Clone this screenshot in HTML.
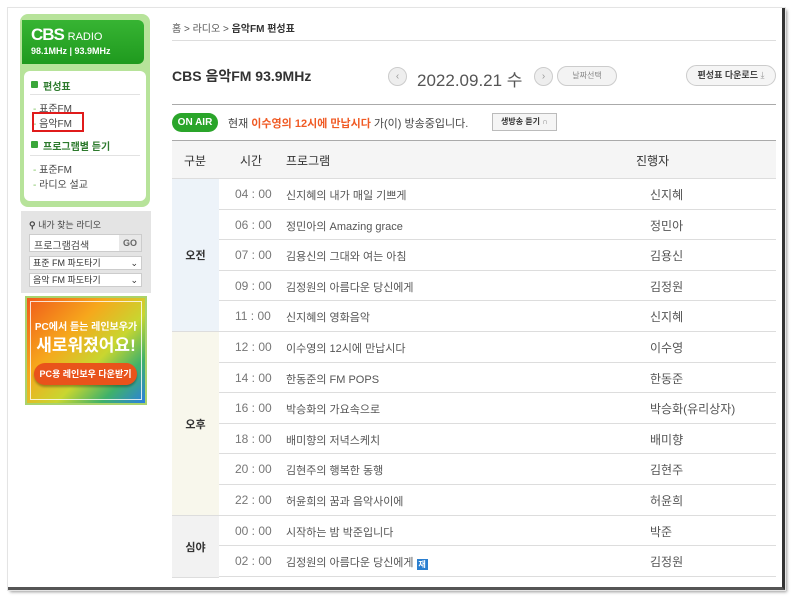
<!DOCTYPE html>
<html><head><meta charset="utf-8"><style>
*{margin:0;padding:0;box-sizing:border-box}
body{width:793px;height:600px;background:#fff;position:relative;overflow:hidden;font-family:"Liberation Sans","Noto Sans CJK KR",sans-serif;color:#333}
.a{position:absolute}
.page{left:8px;top:8px;width:777px;height:582px;background:#fff;border-right:3px solid #333;border-bottom:3px solid #555;box-shadow:2px 2px 3px rgba(0,0,0,.4);outline:1px solid #e4e4e4}
.row{position:absolute;left:219px;width:557px;height:31px;border-top:1px solid #ddd;font-size:11px;color:#555}
.row span{position:absolute;line-height:14px;height:14px;white-space:nowrap}
.t{left:16px;top:8px;font-size:12px;color:#777}
.row span.p{left:67px;top:10px}
.h{left:431px;top:9px;font-size:12px;color:#555}
.sec{position:absolute;left:172px;width:47px;border-top:1px solid #ddd;font-size:11px;font-weight:bold;color:#333;display:flex;align-items:center;justify-content:center}
</style></head><body>
<div class="a page"></div>

<!-- sidebar -->
<div class="a" style="left:20px;top:14px;width:130px;height:193px;background:#b7e39a;border-radius:8px"></div>
<div class="a" style="left:22px;top:20px;width:122px;height:44px;background:linear-gradient(#37b433,#1f9a1e);border-radius:0 6px 6px 0"></div>
<div class="a" style="left:31px;top:25px;color:#fff;font-size:17px;font-weight:bold;letter-spacing:-1px">CBS <span style="font-size:11px;font-weight:normal;letter-spacing:0">RADIO</span></div>
<div class="a" style="left:31px;top:46px;color:#fff;font-size:9px;font-weight:bold">98.1MHz | 93.9MHz</div>
<div class="a" style="left:24px;top:71px;width:122px;height:130px;background:#fff;border-radius:6px"></div>
<div class="a" style="left:31px;top:81px;width:7px;height:7px;background:#3aa63a;border-radius:1px"></div>
<div class="a" style="left:43px;top:78px;font-size:10px;font-weight:bold;color:#2d7a2d">편성표</div>
<div class="a" style="left:30px;top:94px;width:110px;height:1px;background:#e2e2e2"></div>
<div class="a" style="left:33px;top:100px;font-size:10px;color:#444"><span style="color:#7bc35b">-</span> 표준FM</div>
<div class="a" style="left:33px;top:115px;font-size:10px;color:#444"><span style="color:#7bc35b">-</span> 음악FM</div>
<div class="a" style="left:32px;top:112px;width:52px;height:20px;border:2px solid #e01b1b"></div>
<div class="a" style="left:31px;top:141px;width:7px;height:7px;background:#3aa63a;border-radius:1px"></div>
<div class="a" style="left:43px;top:138px;font-size:10px;font-weight:bold;color:#2d7a2d">프로그램별 듣기</div>
<div class="a" style="left:30px;top:155px;width:110px;height:1px;background:#e2e2e2"></div>
<div class="a" style="left:33px;top:161px;font-size:10px;color:#444"><span style="color:#7bc35b">-</span> 표준FM</div>
<div class="a" style="left:33px;top:176px;font-size:10px;color:#444"><span style="color:#7bc35b">-</span> 라디오 설교</div>

<div class="a" style="left:21px;top:211px;width:130px;height:82px;background:#e4e4e4"></div>
<div class="a" style="left:29px;top:218px;font-size:9px;color:#444"><b>&#9906;</b> 내가 찾는 라디오</div>
<div class="a" style="left:29px;top:234px;width:113px;height:18px;background:#fff;border:1px solid #ccc;font-size:10px;padding:2px 4px;color:#444">프로그램검색</div>
<div class="a" style="left:119px;top:235px;width:22px;height:16px;background:#e8e8e8;font-size:9px;font-weight:bold;color:#666;text-align:center;line-height:16px">GO</div>
<div class="a" style="left:29px;top:256px;width:113px;height:14px;background:#fff;border:1px solid #ccc;font-size:9px;padding:0 3px;line-height:12px">표준 FM 파도타기<span style="float:right">&#8964;</span></div>
<div class="a" style="left:29px;top:273px;width:113px;height:14px;background:#fff;border:1px solid #ccc;font-size:9px;padding:0 3px;line-height:12px">음악 FM 파도타기<span style="float:right">&#8964;</span></div>

<div class="a" style="left:25px;top:296px;width:122px;height:109px;background:linear-gradient(135deg,#f05a1a 0%,#f6a81c 35%,#c8d630 60%,#3fb16a 80%,#2a7fe0 100%);border:2px solid #a9d36d"></div>
<div class="a" style="left:30px;top:301px;width:112px;height:99px;border:1px solid rgba(255,255,255,.8)"></div>
<div class="a" style="left:25px;top:318px;width:122px;text-align:center;color:#fff;font-size:10px;font-weight:bold">PC에서 듣는 레인보우가</div>
<div class="a" style="left:25px;top:331px;width:122px;text-align:center;color:#fff;font-size:17px;font-weight:bold">새로워졌어요!</div>
<div class="a" style="left:34px;top:363px;width:103px;height:22px;background:#e9531b;border-radius:11px;color:#fff;font-size:9px;font-weight:bold;text-align:center;line-height:22px;box-shadow:0 2px 2px rgba(0,0,0,.3)">PC용 레인보우 다운받기</div>

<!-- main -->
<div class="a" style="left:172px;top:20px;font-size:10px;color:#555">홈 &gt; 라디오 &gt; <b style="color:#333">음악FM 편성표</b></div>
<div class="a" style="left:172px;top:40px;width:604px;height:1px;background:#ddd"></div>
<div class="a" style="left:172px;top:66px;font-size:14px;font-weight:bold;color:#333">CBS 음악FM 93.9MHz</div>
<div class="a" style="left:388px;top:67px;width:19px;height:19px;border-radius:50%;background:#eee;border:1px solid #ccc;font-size:10px;color:#999;text-align:center;line-height:17px">&lsaquo;</div>
<div class="a" style="left:417px;top:66px;font-size:17px;color:#555">2022.09.21 수</div>
<div class="a" style="left:534px;top:67px;width:19px;height:19px;border-radius:50%;background:#eee;border:1px solid #ccc;font-size:10px;color:#999;text-align:center;line-height:17px">&rsaquo;</div>
<div class="a" style="left:557px;top:66px;width:60px;height:20px;border-radius:10px;background:#f3f3f3;border:1px solid #ccc;font-size:8px;color:#888;text-align:center;line-height:18px">날짜선택</div>
<div class="a" style="left:686px;top:65px;width:90px;height:21px;border-radius:11px;background:#f5f5f5;border:1px solid #ccc;font-size:9px;font-weight:bold;color:#444;text-align:center;line-height:19px">편성표 다운로드 <span style="font-weight:normal;color:#999">&#10515;</span></div>
<div class="a" style="left:172px;top:104px;width:604px;height:1px;background:#aaa"></div>
<div class="a" style="left:172px;top:113px;width:46px;height:19px;border-radius:10px;background:#2aa52a;color:#fff;font-size:10px;font-weight:bold;text-align:center;line-height:19px">ON AIR</div>
<div class="a" style="left:228px;top:115px;font-size:11px;color:#444">현재 <b style="color:#f05a24">이수영의 12시에 만납시다</b> 가(이) 방송중입니다.</div>
<div class="a" style="left:492px;top:113px;width:65px;height:18px;background:#f5f5f5;border:1px solid #bbb;font-size:8px;font-weight:bold;color:#333;text-align:center;line-height:16px">생방송 듣기 <span style="font-weight:normal;color:#888">&#8745;</span></div>

<div class="a" style="left:172px;top:140px;width:604px;height:38px;background:#f5f5f5;border-top:1px solid #aaa"></div>
<div class="a" style="left:184px;top:152px;font-size:12px;color:#333">구분</div>
<div class="a" style="left:240px;top:152px;font-size:12px;color:#333">시간</div>
<div class="a" style="left:286px;top:152px;font-size:12px;color:#333">프로그램</div>
<div class="a" style="left:636px;top:152px;font-size:12px;color:#333">진행자</div>

<div class="sec" style="top:178px;height:153px;background:#edf3f9">오전</div>
<div class="sec" style="top:331px;height:184px;background:#f8f7ec">오후</div>
<div class="sec" style="top:515px;height:62px;background:#f2f2f2">심야</div>

<div class="row" style="top:178px"><span class="t">04 : 00</span><span class="p">신지혜의 내가 매일 기쁘게</span><span class="h">신지혜</span></div>
<div class="row" style="top:209px"><span class="t">06 : 00</span><span class="p">정민아의 Amazing grace</span><span class="h">정민아</span></div>
<div class="row" style="top:239px"><span class="t">07 : 00</span><span class="p">김용신의 그대와 여는 아침</span><span class="h">김용신</span></div>
<div class="row" style="top:270px"><span class="t">09 : 00</span><span class="p">김정원의 아름다운 당신에게</span><span class="h">김정원</span></div>
<div class="row" style="top:300px"><span class="t">11 : 00</span><span class="p">신지혜의 영화음악</span><span class="h">신지혜</span></div>
<div class="row" style="top:331px"><span class="t">12 : 00</span><span class="p">이수영의 12시에 만납시다</span><span class="h">이수영</span></div>
<div class="row" style="top:362px"><span class="t">14 : 00</span><span class="p">한동준의 FM POPS</span><span class="h">한동준</span></div>
<div class="row" style="top:392px"><span class="t">16 : 00</span><span class="p">박승화의 가요속으로</span><span class="h">박승화(유리상자)</span></div>
<div class="row" style="top:423px"><span class="t">18 : 00</span><span class="p">배미향의 저녁스케치</span><span class="h">배미향</span></div>
<div class="row" style="top:453px"><span class="t">20 : 00</span><span class="p">김현주의 행복한 동행</span><span class="h">김현주</span></div>
<div class="row" style="top:484px"><span class="t">22 : 00</span><span class="p">허윤희의 꿈과 음악사이에</span><span class="h">허윤희</span></div>
<div class="row" style="top:515px"><span class="t">00 : 00</span><span class="p">시작하는 밤 박준입니다</span><span class="h">박준</span></div>
<div class="row" style="top:545px;height:32px;border-bottom:1px solid #ddd"><span class="t">02 : 00</span><span class="p">김정원의 아름다운 당신에게 <b style="display:inline-block;width:11px;height:11px;background:#2b7fd0;color:#fff;font-size:8px;text-align:center;line-height:11px;vertical-align:-1px">재</b></span><span class="h">김정원</span></div>
<div class="a" style="left:172px;top:577px;width:47px;height:1px;background:#ddd"></div>
</body></html>
